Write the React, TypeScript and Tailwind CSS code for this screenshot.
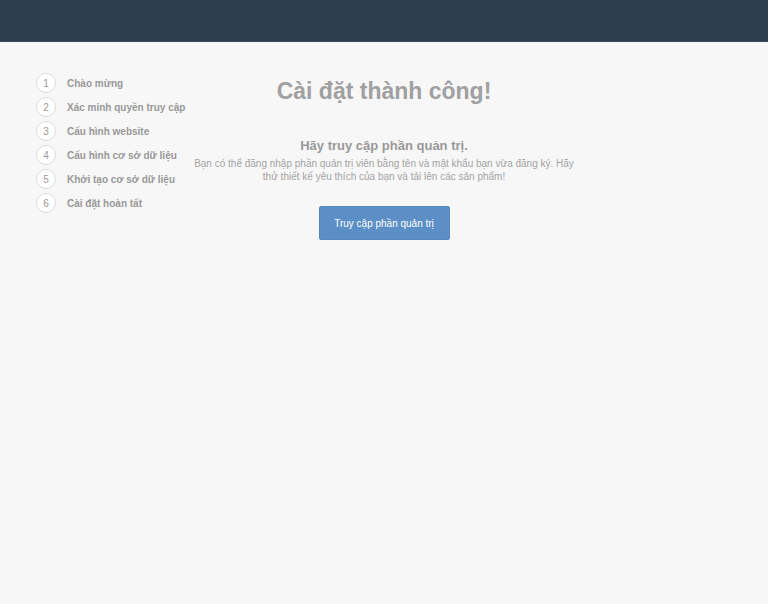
const steps = [
  'Chào mừng',
  'Xác minh quyền truy cập',
  'Cấu hình website',
  'Cấu hình cơ sở dữ liệu',
  'Khởi tạo cơ sở dữ liệu',
  'Cài đặt hoàn tất',
]

export default function App() {
  return (
    <div className="min-h-[604px] bg-[#f7f7f7] font-['Liberation_Sans',Arial,sans-serif]">
      <header className="h-[42px] border-b border-[#3e4d5e] bg-[#2d3e50]" />

      <div className="grid grid-cols-[minmax(0,1fr)_400px_minmax(0,1fr)] pt-[31px]">
        <ol className="flex flex-col gap-[4px] pl-[36px]">
          {steps.map((step, i) => (
            <li key={step} className="flex h-[20px] items-center gap-[11px] whitespace-nowrap">
              <span className="flex h-[20px] w-[20px] shrink-0 items-center justify-center rounded-full border border-[#dcdcdc] bg-white text-[10px] text-[#999]">
                {i + 1}
              </span>
              <span className="text-[10px] font-bold text-[#999]">{step}</span>
            </li>
          ))}
        </ol>

        <main className="flex flex-col items-center text-center">
          <h1 className="mt-[3px] text-[23px] font-bold leading-[30px] text-[#a0a0a0]">Cài đặt thành công!</h1>
          <h2 className="mt-[31px] text-[13px] font-bold leading-[18px] text-[#999]">Hãy truy cập phần quản trị.</h2>
          <p className="mt-[2px] px-[5px] text-[10px] leading-[13px] text-[#a3a3a3]">
            Bạn có thể đăng nhập phần quản trị viên bằng tên và mật khẩu bạn vừa đăng ký. Hãy thử thiết kế yêu thích của bạn và tải lên các sản phẩm!
          </p>
          <button className="mt-[23px] h-[34px] w-[131px] rounded-[2px] border border-[#5587bd] bg-[#5b8fc5] text-[10px] text-white">
            Truy cập phần quản trị
          </button>
        </main>
        <div />
      </div>
    </div>
  )
}
